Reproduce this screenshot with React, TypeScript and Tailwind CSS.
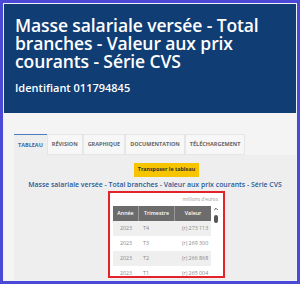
import { ChevronUp } from "lucide-react"

const tabs = ["Tableau", "Révision", "Graphique", "Documentation", "Téléchargement"]

const rows = [
  { year: "2023", q: "T4", value: "(r) 273 113" },
  { year: "2023", q: "T3", value: "(r) 269 300" },
  { year: "2023", q: "T2", value: "(r) 266 868" },
  { year: "2023", q: "T1", value: "(r) 265 004" },
]

function App() {
  return (
    <div className="w-[300px] h-[284px] border-[3px] border-[#4a4ad6] bg-[#f0f0fa] p-px flex flex-col overflow-hidden font-['Open_Sans',sans-serif]">
      <div className="h-[109px] shrink-0 bg-[#0f3d74] pl-[11px] pt-[12px] text-white">
        <h1 className="text-[17.5px] leading-[18px] font-semibold tracking-[-0.1px] w-[272px]">
          Masse salariale versée - Total branches - Valeur aux prix courants - Série CVS
        </h1>
        <div className="mt-[11px] text-[11px] leading-[14px] font-semibold">Identifiant 011794845</div>
      </div>

      <div className="flex-1 bg-[#f4f4f4] pl-[10px] pt-[21px] flex flex-col">
        <div className="flex h-[21px] text-[5.5px] font-bold uppercase">
          {tabs.map((t, i) => (
            <div
              key={t}
              className={
                i === 0
                  ? "flex items-center px-[4px] border-t-[1.5px] border-[#4a7cc4] bg-[#eeeeee] text-[#3b6aa8]"
                  : "flex items-center px-[4px] border border-[#e6e6e6] bg-[#f7f7f7] text-[#666666]"
              }
            >
              {t}
            </div>
          ))}
        </div>

        <div className="flex-1 bg-[#eeeeee] flex flex-col items-center">
          <div className="mt-[8px] ml-[23px] h-[14px] px-[4px] bg-[#f7c500] text-[5.3px] font-bold text-[#333] flex items-center">
            Transposer le tableau
          </div>
          <div className="mt-[3px] text-[6.9px] leading-[10px] font-semibold text-[#2b5996] whitespace-nowrap">
            Masse salariale versée - Total branches - Valeur aux prix courants - Série CVS
          </div>
          <div className="mt-[1px] ml-[23px] w-[117px] h-[87px] border-2 border-[#e3232b] bg-white px-[3px] pt-[3px] overflow-hidden">
            <div className="text-right text-[4.8px] leading-[7px] text-[#999] pr-[2px]">millions d'euros</div>
            <div className="mt-[3px] flex">
              <div className="w-[100px]">
                <div className="flex h-[15px] bg-[#6c6c6c] text-white text-[5.3px] font-semibold">
                  <div className="w-[26px] flex items-center justify-center border-r border-[#999]">Année</div>
                  <div className="w-[36px] flex items-center justify-center border-r border-[#999]">Trimestre</div>
                  <div className="flex-1 flex items-center justify-center">Valeur</div>
                </div>
                {rows.map((r, i) => (
                  <div key={r.q} className={"flex h-[15px] text-[5.3px] text-[#888] " + (i % 2 === 0 ? "bg-[#efefef]" : "bg-white")}>
                    <div className="w-[26px] flex items-center justify-center">{r.year}</div>
                    <div className="w-[36px] flex items-center pl-[4px]">{r.q}</div>
                    <div className="flex-1 flex items-center justify-end pr-[3px]">{r.value}</div>
                  </div>
                ))}
              </div>
              <div className="w-[9px] flex flex-col items-center">
                <ChevronUp className="w-[6px] h-[6px] text-[#555]" strokeWidth={4} />
                <div className="mt-[3px] w-[4px] h-[8px] rounded-full bg-[#555]" />
              </div>
            </div>
          </div>
        </div>
      </div>
    </div>
  )
}

export default App
